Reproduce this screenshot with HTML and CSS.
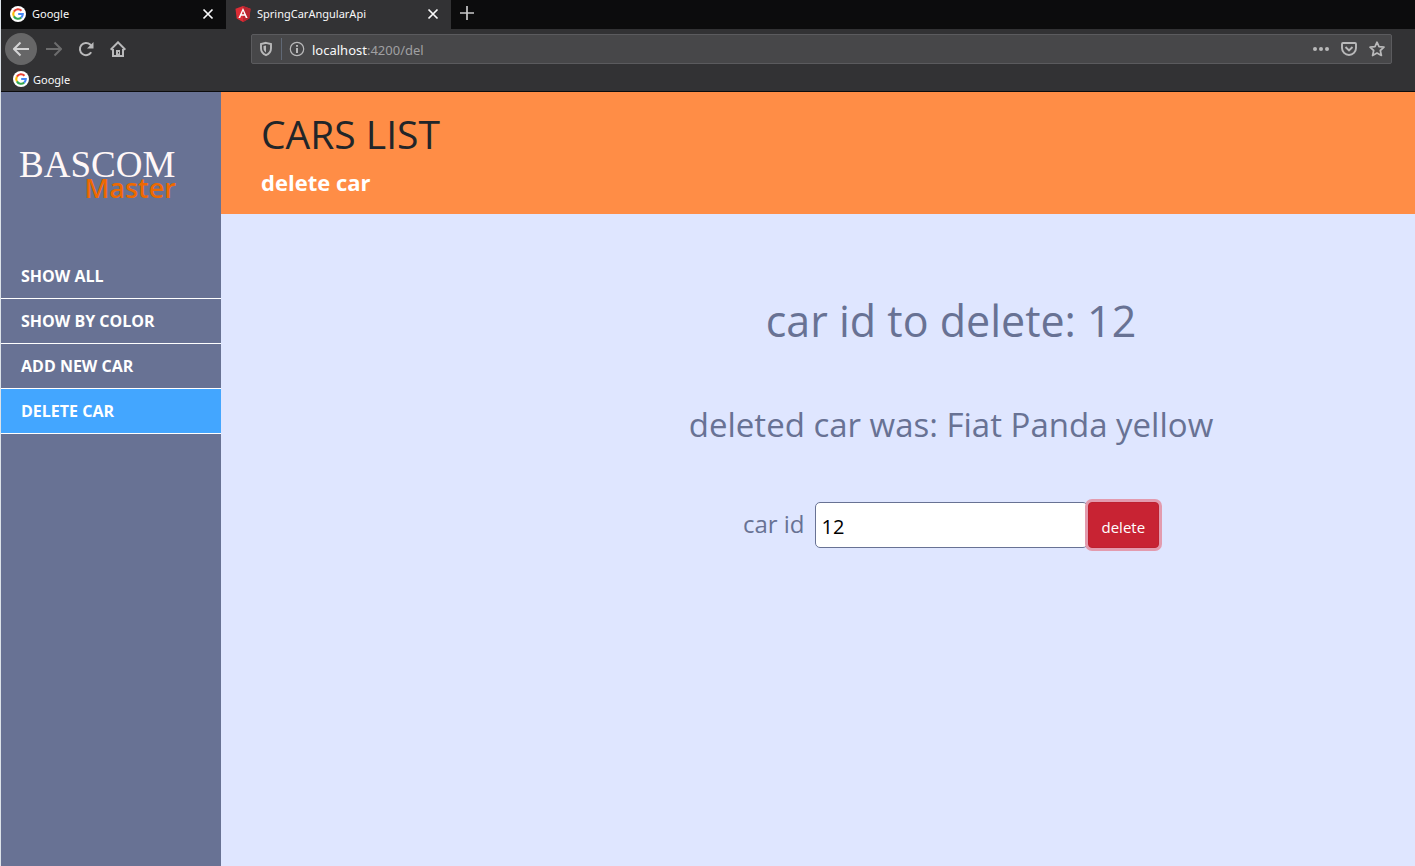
FILE: index.html
```html
<!DOCTYPE html>
<html lang="en">
<head>
<meta charset="utf-8">
<title>SpringCarAngularApi</title>
<link rel="stylesheet" href="styles.css">
</head>
<body>
<svg class="defs" aria-hidden="true">
  <symbol id="google" viewBox="0 0 16 16">
    <circle cx="8" cy="8" r="8" fill="#fff"/>
    <g fill="none" stroke-width="2.1">
      <path d="M3.9 5.6A4.8 4.8 0 0 1 11.5 4.7" stroke="#ea4335"/>
      <path d="M3.9 10.4A4.8 4.8 0 0 1 3.9 5.6" stroke="#fbbc05"/>
      <path d="M11.2 11.6A4.8 4.8 0 0 1 3.9 10.4" stroke="#34a853"/>
      <path d="M8.2 8H12.8A4.8 4.8 0 0 1 11.2 11.6" stroke="#4285f4"/>
    </g>
  </symbol>
  <symbol id="close" viewBox="0 0 16 16"><path d="M3.5 3.5l9 9M12.5 3.5l-9 9" fill="none" stroke="currentColor" stroke-width="1.7"/></symbol>
</svg>
<div class="browser">
  <header class="chrome">
    <div class="tabs">
      <div class="tab">
        <svg class="icon"><use href="#google"/></svg>
        <span class="tab-title">Google</span>
        <button class="icon-button" aria-label="Close Google"><svg class="icon"><use href="#close"/></svg></button>
      </div>
      <div class="tab tab-active">
        <svg class="icon" viewBox="0 0 16 16"><path d="M8 0l7.5 2.7-1.2 9.8L8 16l-6.3-3.5L.5 2.7z" fill="#dd2c35"/><path d="M8 0l7.5 2.7-1.2 9.8L8 16z" fill="#b9252f"/><path d="M8 2L3.4 12.1h1.8l.9-2.3h3.8l.9 2.3h1.8zM8 5.1l1.3 3.2H6.7z" fill="#fff"/></svg>
        <span class="tab-title">SpringCarAngularApi</span>
        <button class="icon-button" aria-label="Close SpringCarAngularApi"><svg class="icon"><use href="#close"/></svg></button>
      </div>
      <button class="icon-button new-tab" aria-label="New tab"><svg class="icon" viewBox="0 0 16 16"><path d="M8 1v14M1 8h14" fill="none" stroke="currentColor" stroke-width="1.7"/></svg></button>
    </div>
    <div class="toolbar">
      <div class="nav-buttons">
        <button class="icon-button back" aria-label="Back"><svg class="icon" viewBox="0 0 16 16"><path d="M16 8H1.5M7.5 1.5L1 8l6.5 6.5" fill="none" stroke="currentColor" stroke-width="2"/></svg></button>
        <button class="icon-button forward" aria-label="Forward"><svg class="icon" viewBox="0 0 16 16"><path d="M0 8h14.5M8.5 1.5L15 8l-6.5 6.5" fill="none" stroke="currentColor" stroke-width="2"/></svg></button>
        <button class="icon-button" aria-label="Reload"><svg class="icon" viewBox="0 0 16 16"><path d="M13.2 11.3A6.1 6.1 0 1 1 12.2 3.6L13.5 5" fill="none" stroke="currentColor" stroke-width="2"/><path d="M15.5 1v6.5H9z" fill="currentColor"/></svg></button>
        <button class="icon-button" aria-label="Home"><svg class="icon" viewBox="0 0 16 16"><path d="M.6 8.7L8 1.3l7.4 7.4M3 8v7h10V8" fill="none" stroke="currentColor" stroke-width="2"/><path d="M6 9h4v6H6z" fill="currentColor"/><path d="M8 11h1v1.5H8z" fill="#323234"/></svg></button>
      </div>
      <div class="address">
        <svg class="icon shield" viewBox="0 0 16 16"><path d="M8 1.8l5 1.3v4.2c0 3.4-2 5.6-5 6.9-3-1.3-5-3.5-5-6.9V3.1z" fill="none" stroke="currentColor" stroke-width="1.9"/><path d="M8 4.4v7C6.3 10.3 5.5 9 5.5 7V5z" fill="currentColor"/></svg>
        <span class="divider"></span>
        <svg class="icon" viewBox="0 0 16 16"><circle cx="8" cy="8" r="6.7" fill="none" stroke="currentColor" stroke-width="1.2"/><path d="M7 4h2v1.8H7zM7 7h2v5H7z" fill="currentColor"/></svg>
        <div class="url" role="textbox" aria-label="Address" tabindex="0"><span class="host">localhost</span>:4200/del</div>
        <button class="icon-button" aria-label="Page actions"><svg class="icon" viewBox="0 0 16 16" fill="currentColor"><circle cx="2" cy="8" r="2"/><circle cx="8" cy="8" r="2"/><circle cx="14" cy="8" r="2"/></svg></button>
        <button class="icon-button" aria-label="Save to Pocket"><svg class="icon" viewBox="0 0 16 16"><path d="M2 2h12a1 1 0 0 1 1 1v4a7 7 0 0 1-14 0V3a1 1 0 0 1 1-1zM4.5 6L8 9.5 11.5 6" fill="none" stroke="currentColor" stroke-width="1.9"/></svg></button>
        <button class="icon-button" aria-label="Bookmark this page"><svg class="icon" viewBox="0 0 16 16"><path d="M8 1.2l2 4.5 5 .5-3.7 3.3 1.1 5L8 12l-4.4 2.5 1.1-5L1 6.2l5-.5z" fill="none" stroke="currentColor" stroke-width="1.7" stroke-linejoin="round"/></svg></button>
      </div>
    </div>
    <nav class="bookmarks" aria-label="Bookmarks"><a class="bookmark" href="#"><svg class="icon"><use href="#google"/></svg>Google</a></nav>
  </header>
  <div class="page">
    <aside class="sidebar">
      <div class="logo"><span class="logo-main">BASCOM</span><span class="logo-sub">Master</span></div>
      <nav class="menu">
        <a class="menu-item" href="#">SHOW ALL</a>
        <a class="menu-item" href="#">SHOW BY COLOR</a>
        <a class="menu-item" href="#">ADD NEW CAR</a>
        <a class="menu-item menu-active" href="#" aria-current="page">DELETE CAR</a>
      </nav>
    </aside>
    <main class="main">
      <header class="banner">
        <h1 class="title">CARS LIST</h1>
        <p class="subtitle">delete car</p>
      </header>
      <section class="content">
        <h2 class="prompt">car id to delete: 12</h2>
        <p class="result">deleted car was: Fiat Panda yellow</p>
        <form class="form">
          <label class="label" for="car-id">car id</label>
          <input class="field" id="car-id" type="text" value="12">
          <button class="delete" type="button">delete</button>
        </form>
      </section>
    </main>
  </div>
</div>
</body>
</html>
```
FILE: styles.css
```css
* { box-sizing: border-box; }
body {
  margin: 0;
  background: #dfe6ff;
  font-family: "Open Sans", "Noto Sans", sans-serif;
}
h1, h2, p { margin: 0; font-weight: 400; }
a { color: inherit; text-decoration: none; }
.defs { display: none; }
.browser {
  display: flex;
  flex-direction: column;
  min-height: 100vh;
  border-left: 1px solid #dce2e8;
}
.icon { display: block; flex: none; width: 16px; height: 16px; }
.icon-button {
  display: grid;
  place-items: center;
  flex: none;
  padding: 0;
  border: 0;
  background: none;
  color: inherit;
}

.chrome {
  background: #323234;
  border-bottom: 1px solid #0c0c0d;
  color: #f9f9fa;
  font-family: "Noto Sans", sans-serif;
  font-size: 11px;
}
.tabs { display: flex; height: 29px; background: #0c0c0d; }
.tab {
  display: flex;
  align-items: center;
  gap: 6px;
  width: 225px;
  padding: 0 10px 2px 9px;
}
.tab-active { background: #323234; }
.tab-title { flex: 1; }
.new-tab { width: 32px; height: 25px; color: #c8c8c9; }
.toolbar {
  display: flex;
  align-items: center;
  gap: 125px;
  height: 40px;
  padding: 0 23px 0 4px;
  color: #b9b9ba;
}
.nav-buttons { display: flex; align-items: center; gap: 16px; }
.back {
  width: 32px;
  height: 32px;
  margin-right: -7px;
  border-radius: 50%;
  background: #666667;
  color: #d4d4d5;
}
.forward { color: #6c6c6d; }
.address {
  display: flex;
  flex: 1;
  align-items: center;
  gap: 12px;
  height: 30px;
  padding: 0 6px;
  border: 1px solid #5b5b5e;
  border-radius: 2px;
  background: #474749;
}
.shield { margin-right: -5px; }
.divider { width: 1px; height: 22px; margin-right: -5px; background: #606875; }
.url { flex: 1; margin-left: -5px; padding-top: 1px; color: #a0a0a2; font-size: 13px; }
.host { color: #f9f9fa; }
.bookmarks { display: flex; height: 22px; padding: 0 12px; }
.bookmark { display: flex; align-items: center; gap: 4px; height: 20px; }

.page { display: flex; flex: 1; }
.sidebar { flex: none; width: 220px; background: #687294; }
.logo {
  display: flex;
  flex-direction: column;
  width: 175px;
  padding: 60px 0 56px 18px;
}
.logo-main {
  color: #fff7f7;
  font-family: "Liberation Serif", serif;
  font-size: 37px;
  line-height: 26px;
}
.logo-sub {
  align-self: flex-end;
  color: #ee6900;
  font-size: 27px;
  font-weight: 600;
  line-height: 20px;
}
.menu-item {
  display: block;
  padding: 11px 20px;
  border-bottom: 1px solid #fff;
  color: #fff;
  font-size: 16px;
  font-weight: 700;
  line-height: 22px;
}
.menu-active { background: #43a6ff; }
.main { flex: 1; min-width: 0; color: #687294; }
.banner { padding: 18px 40px 13px; background: #ff8d46; }
.title { color: #212529; font-size: 39px; line-height: 48px; }
.subtitle { margin-top: 5px; color: #fff; font-size: 22px; font-weight: 700; line-height: 38px; }
.content {
  display: flex;
  flex-direction: column;
  align-items: center;
  padding: 78px 0 0 266px;
}
.prompt { font-size: 43px; line-height: 58px; }
.result { margin-top: 51px; font-size: 33px; line-height: 48px; }
.form { display: flex; align-items: center; margin-top: 53px; }
.label { margin: 0 10px 4px 0; font-size: 24px; }
.field {
  width: 273px;
  height: 46px;
  padding: 3px 6px 0;
  border: 1px solid #687294;
  border-radius: 5px;
  background: #fff;
  color: #000;
  font: 20px "Open Sans", sans-serif;
}
.delete {
  height: 46px;
  padding: 3px 13px 0;
  border: 1px solid #bd2130;
  border-radius: 4px;
  background: #c82333;
  box-shadow: 0 0 0 3px #e39bae;
  color: #fff;
  font: 15px "Open Sans", sans-serif;
}
```
